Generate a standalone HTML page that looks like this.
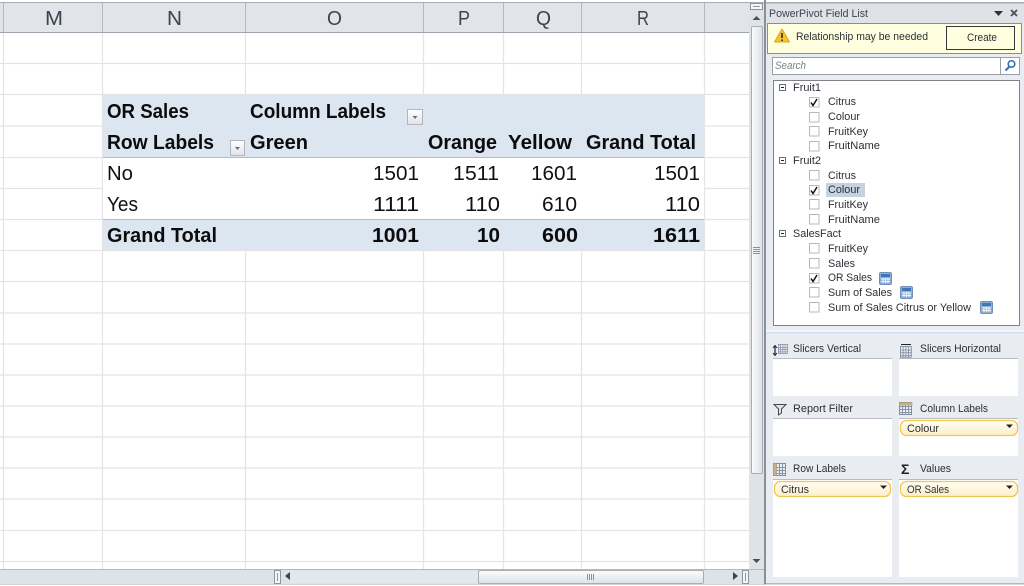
<!DOCTYPE html>
<html><head><meta charset="utf-8"><title>PowerPivot Field List</title>
<style>
html,body{margin:0;padding:0;background:#fff;overflow:hidden}
svg{display:block;filter:blur(.35px)}
text{font-family:"Liberation Sans",sans-serif;white-space:pre}
.h{font-size:20px;fill:#3c444f}
.b{font-size:20px;font-weight:bold;fill:#0c0c0c}
.n{font-size:20px;fill:#111}
.s{font-size:11px;fill:#2b2f36}
</style></head><body>
<svg width="1024" height="586" viewBox="0 0 1024 586" xmlns="http://www.w3.org/2000/svg">
<defs>
<linearGradient id="pill" x1="0" y1="0" x2="0" y2="1"><stop offset="0" stop-color="#fffdf3"/><stop offset="1" stop-color="#fdeec8"/></linearGradient>
<linearGradient id="btn" x1="0" y1="0" x2="0" y2="1"><stop offset="0" stop-color="#fff"/><stop offset="1" stop-color="#dfe3ea"/></linearGradient>
<linearGradient id="thumb" x1="0" y1="0" x2="0" y2="1"><stop offset="0" stop-color="#fbfcfd"/><stop offset="1" stop-color="#dde1e8"/></linearGradient>
<linearGradient id="vthumb" x1="0" y1="0" x2="1" y2="0"><stop offset="0" stop-color="#fbfcfd"/><stop offset="1" stop-color="#dde1e8"/></linearGradient>
<g id="calc"><rect x="0.5" y="0.5" width="12" height="12" rx="1.5" fill="#8fb0d8" stroke="#6f8fb8"/><rect x="2" y="2" width="9" height="3" fill="#3f76b5"/><path d="M2 7h9M2 9.500h9M4 6v5M6.500 6v5M9 6v5" stroke="#eef3f9" stroke-width="1"/></g>
<g id="tbl"><rect x="0.5" y="0.5" width="12" height="12" fill="#eceef5" stroke="#7f8a9e"/><path d="M0 4.500h13M0 7.500h13M0 10.500h13M3.500 0v13M6.500 0v13M9.500 0v13" stroke="#8a94a8" stroke-width="1"/></g>
<path id="cb" d="M0.5 0.500h9.500v9.500h-9.500z" fill="#fff" stroke="#b5b9bf"/>
<g id="minus"><rect x="0.5" y="0.5" width="6" height="6" fill="#fff" stroke="#6c7075"/><path d="M2 3.500h3" stroke="#222"/></g>
<path id="check" d="M2 5.500l2 3 4-6.500" fill="none" stroke="#111" stroke-width="1.500"/>
</defs>

<!-- sheet -->
<rect width="1024" height="586" fill="#fff"/>
<rect x="0" y="2" width="1024" height="1.500" fill="#a9aeb5"/>
<rect x="0" y="3" width="749" height="29" fill="#e1e4e8"/>
<rect x="0" y="32" width="749" height="1" fill="#9ea4ac"/>

<g stroke="#e4e4e4" stroke-width="1.200">
<path d="M0 63.500h749M0 94.500h749M0 126h749M0 157.500h749M0 188.500h749M0 219.500h749M0 250.500h749M0 281.500h749M0 313h749M0 344h749M0 375h749M0 406h749M0 437h749M0 468h749M0 499h749M0 530.500h749M0 561.500h749"/>
<path d="M3.500 33v537M102.500 33v537M245.500 33v537M423.500 33v537M503.500 33v537M581.500 33v537M704.500 33v537"/>
</g>
<g stroke="#b4b9c0" stroke-width="1">
<path d="M3.500 3v29M102.500 3v29M245.500 3v29M423.500 3v29M503.500 3v29M581.500 3v29M704.500 3v29"/>
</g>
<text class="h" x="45" y="25" textLength="18" lengthAdjust="spacingAndGlyphs">M</text>
<text class="h" x="167" y="25" textLength="15" lengthAdjust="spacingAndGlyphs">N</text>
<text class="h" x="327" y="25" textLength="15" lengthAdjust="spacingAndGlyphs">O</text>
<text class="h" x="458" y="25" textLength="12" lengthAdjust="spacingAndGlyphs">P</text>
<text class="h" x="536" y="25" textLength="15" lengthAdjust="spacingAndGlyphs">Q</text>
<text class="h" x="637" y="25" textLength="12" lengthAdjust="spacingAndGlyphs">R</text>

<!-- pivot -->
<rect x="103" y="95" width="601" height="62" fill="#dce6f1"/>
<rect x="103" y="219" width="601" height="31" fill="#dce6f1"/>
<rect x="103" y="157" width="601" height="62" fill="#fff"/>
<path d="M103 157.500h601M103 219.500h601" stroke="#a3bddc" stroke-width="1"/>
<path d="M102.500 157v62M704.500 157v62" stroke="#e4e4e4"/>

<text class="b" x="107" y="118" textLength="82" lengthAdjust="spacingAndGlyphs">OR Sales</text>
<text class="b" x="250" y="118" textLength="136" lengthAdjust="spacingAndGlyphs">Column Labels</text>
<text class="b" x="107" y="149" textLength="107" lengthAdjust="spacingAndGlyphs">Row Labels</text>
<text class="b" x="250" y="149" textLength="58" lengthAdjust="spacingAndGlyphs">Green</text>
<text class="b" x="428" y="149" textLength="69" lengthAdjust="spacingAndGlyphs">Orange</text>
<text class="b" x="508" y="149" textLength="64" lengthAdjust="spacingAndGlyphs">Yellow</text>
<text class="b" x="586" y="149" textLength="110" lengthAdjust="spacingAndGlyphs">Grand Total</text>

<text class="n" x="107" y="180" textLength="26" lengthAdjust="spacingAndGlyphs">No</text>
<text class="n" x="107" y="211" textLength="31" lengthAdjust="spacingAndGlyphs">Yes</text>
<text class="b" x="107" y="242" textLength="110" lengthAdjust="spacingAndGlyphs">Grand Total</text>

<text class="n" x="373" y="180" textLength="46" lengthAdjust="spacingAndGlyphs">1501</text>
<text class="n" x="453" y="180" textLength="46" lengthAdjust="spacingAndGlyphs">1511</text>
<text class="n" x="531" y="180" textLength="46" lengthAdjust="spacingAndGlyphs">1601</text>
<text class="n" x="654" y="180" textLength="46" lengthAdjust="spacingAndGlyphs">1501</text>
<text class="n" x="373" y="211" textLength="46" lengthAdjust="spacingAndGlyphs">1111</text>
<text class="n" x="465" y="211" textLength="35" lengthAdjust="spacingAndGlyphs">110</text>
<text class="n" x="542" y="211" textLength="35" lengthAdjust="spacingAndGlyphs">610</text>
<text class="n" x="665" y="211" textLength="35" lengthAdjust="spacingAndGlyphs">110</text>
<text class="b" x="372" y="242" textLength="47" lengthAdjust="spacingAndGlyphs">1001</text>
<text class="b" x="477" y="242" textLength="23" lengthAdjust="spacingAndGlyphs">10</text>
<text class="b" x="542" y="242" textLength="36" lengthAdjust="spacingAndGlyphs">600</text>
<text class="b" x="653" y="242" textLength="47" lengthAdjust="spacingAndGlyphs">1611</text>

<!-- filter buttons -->
<rect x="230.500" y="140.500" width="14" height="15" fill="url(#btn)" stroke="#b3b7bd"/>
<path d="M235 147h5l-2.500 3z" fill="#6b6f75"/>
<rect x="407.500" y="109.500" width="15" height="15" fill="url(#btn)" stroke="#b3b7bd"/>
<path d="M412.500 116h5l-2.500 3z" fill="#6b6f75"/>

<!-- vertical scrollbar -->
<rect x="749" y="3" width="15" height="567" fill="#dee2e9"/>
<rect x="750.500" y="3.500" width="12" height="6" fill="#f5f6f8" stroke="#8f959d"/>
<path d="M753 6.500h7" stroke="#8f959d"/>
<path d="M752.500 20l4-4 4 4z" fill="#4a4f56"/>
<rect x="751.500" y="26.500" width="11" height="447" rx="1.500" fill="url(#vthumb)" stroke="#a9aeb5"/>
<path d="M753 247.500h7M753 249.500h7M753 251.500h7M753 253.500h7" stroke="#8d9299"/>
<path d="M752.500 559h8l-4 4z" fill="#4a4f56"/>
<rect x="764" y="0" width="2" height="586" fill="#8b9097"/>

<!-- horizontal scrollbar -->
<rect x="0" y="569" width="764" height="15" fill="#dee2e9"/>
<path d="M0 569.500h764" stroke="#b4b9c0"/>
<path d="M0 584.500h764" stroke="#a2a7ae"/>
<rect x="290" y="571" width="188" height="12" fill="#e4e7ed"/>
<rect x="274.500" y="570.500" width="6" height="13" fill="#f5f6f8" stroke="#8f959d"/>
<path d="M277.500 573v8" stroke="#8f959d"/>
<path d="M290 572v8l-5-4z" fill="#3f444b"/>
<rect x="478.500" y="570.500" width="225" height="13" rx="1.500" fill="url(#thumb)" stroke="#a9aeb5"/>
<path d="M587.500 574v6M589.500 574v6M591.500 574v6M593.500 574v6" stroke="#8d9299"/>
<path d="M733 572v8l5-4z" fill="#3f444b"/>
<rect x="742.500" y="570.500" width="6" height="13" fill="#f5f6f8" stroke="#8f959d"/>
<path d="M745.500 573v8" stroke="#8f959d"/>

<!-- panel -->
<rect x="766" y="3" width="258" height="583" fill="#e9ecf1"/>
<rect x="766" y="3" width="258" height="20" fill="#dfe2e7"/>
<rect x="766" y="2" width="258" height="1.500" fill="#a9aeb5"/>
<text class="s" x="769" y="17" textLength="99" lengthAdjust="spacingAndGlyphs" style="fill:#3c444f">PowerPivot Field List</text>
<path d="M994 11h9l-4.500 5z" fill="#30343a"/>
<path d="M1011 10l6 6M1017 10l-6 6" stroke="#4a4f56" stroke-width="1.800"/>

<!-- yellow bar -->
<rect x="767.500" y="23.500" width="254" height="30" fill="#ffffe0" stroke="#8a8e92"/>
<path d="M782 29l7.500 13h-15z" fill="#f6c32e" stroke="#d9a520" stroke-linejoin="round"/>
<path d="M782 33v5M782 39.500v1.500" stroke="#222" stroke-width="1.500"/>
<text class="s" x="796" y="40" textLength="132" lengthAdjust="spacingAndGlyphs">Relationship may be needed</text>
<rect x="946.500" y="26.500" width="68" height="23" fill="#ffffe0" stroke="#33363a"/>
<text class="s" x="967" y="41" textLength="30" lengthAdjust="spacingAndGlyphs">Create</text>

<!-- search -->
<rect x="772.500" y="57.500" width="247" height="17" fill="#fff" stroke="#9a9ea4"/>
<path d="M1000.500 58v16" stroke="#9a9ea4"/>
<text class="s" x="775" y="69" textLength="31" lengthAdjust="spacingAndGlyphs" font-style="italic" style="fill:#7d8187">Search</text>
<circle cx="1011.500" cy="64" r="3.300" fill="none" stroke="#2f6fb5" stroke-width="1.500"/>
<path d="M1009 67l-3.500 3.500" stroke="#2f6fb5" stroke-width="2"/>

<!-- tree -->
<rect x="773.500" y="80.500" width="246" height="245" fill="#fff" stroke="#7f8389"/>
<use href="#minus" x="779" y="84"/>
<text class="s" x="793" y="91" textLength="28" lengthAdjust="spacingAndGlyphs">Fruit1</text>
<use href="#cb" x="809" y="97"/><use href="#check" x="809" y="97"/>
<text class="s" x="828" y="105" textLength="28" lengthAdjust="spacingAndGlyphs">Citrus</text>
<use href="#cb" x="809" y="112"/>
<text class="s" x="828" y="120" textLength="32" lengthAdjust="spacingAndGlyphs">Colour</text>
<use href="#cb" x="809" y="126"/>
<text class="s" x="828" y="135" textLength="40" lengthAdjust="spacingAndGlyphs">FruitKey</text>
<use href="#cb" x="809" y="141"/>
<text class="s" x="828" y="149" textLength="52" lengthAdjust="spacingAndGlyphs">FruitName</text>
<use href="#minus" x="779" y="157"/>
<text class="s" x="793" y="164" textLength="28" lengthAdjust="spacingAndGlyphs">Fruit2</text>
<use href="#cb" x="809" y="170"/>
<text class="s" x="828" y="179" textLength="28" lengthAdjust="spacingAndGlyphs">Citrus</text>
<rect x="826" y="183" width="39" height="14" fill="#c5d2e0"/>
<use href="#cb" x="809" y="185"/><use href="#check" x="809" y="185"/>
<text class="s" x="828" y="193" textLength="32" lengthAdjust="spacingAndGlyphs">Colour</text>
<use href="#cb" x="809" y="199"/>
<text class="s" x="828" y="208" textLength="40" lengthAdjust="spacingAndGlyphs">FruitKey</text>
<use href="#cb" x="809" y="214"/>
<text class="s" x="828" y="223" textLength="52" lengthAdjust="spacingAndGlyphs">FruitName</text>
<use href="#minus" x="779" y="230"/>
<text class="s" x="793" y="237" textLength="48" lengthAdjust="spacingAndGlyphs">SalesFact</text>
<use href="#cb" x="809" y="243"/>
<text class="s" x="828" y="252" textLength="40" lengthAdjust="spacingAndGlyphs">FruitKey</text>
<use href="#cb" x="809" y="258"/>
<text class="s" x="828" y="267" textLength="27" lengthAdjust="spacingAndGlyphs">Sales</text>
<use href="#cb" x="809" y="273"/><use href="#check" x="809" y="273"/>
<text class="s" x="828" y="281" textLength="44" lengthAdjust="spacingAndGlyphs">OR Sales</text>
<use href="#calc" x="879" y="272"/>
<use href="#cb" x="809" y="287"/>
<text class="s" x="828" y="296" textLength="64" lengthAdjust="spacingAndGlyphs">Sum of Sales</text>
<use href="#calc" x="900" y="286"/>
<use href="#cb" x="809" y="302"/>
<text class="s" x="828" y="311" textLength="143" lengthAdjust="spacingAndGlyphs">Sum of Sales Citrus or Yellow</text>
<use href="#calc" x="980" y="301"/>

<!-- divider -->
<rect x="766" y="330" width="258" height="2" fill="#f4f6f9"/>
<rect x="766" y="332" width="258" height="1.500" fill="#cfe0f3"/>

<!-- area labels -->
<path d="M775 346v9" stroke="#222" stroke-width="1.200"/><path d="M773 348l2-2.500 2 2.500M773 353l2 2.500 2-2.500" fill="none" stroke="#222"/>
<g transform="translate(778,344) scale(0.75)"><use href="#tbl"/></g>
<text class="s" x="793" y="352" textLength="68" lengthAdjust="spacingAndGlyphs">Slicers Vertical</text>
<path d="M901 344.500h10" stroke="#222"/>
<g transform="translate(900,346) scale(0.9)"><use href="#tbl"/></g>
<text class="s" x="920" y="352" textLength="81" lengthAdjust="spacingAndGlyphs">Slicers Horizontal</text>
<rect x="773" y="358" width="119" height="38" fill="#fff"/><path d="M773 358.500h119" stroke="#b8bcc2"/>
<rect x="899" y="358" width="119" height="38" fill="#fff"/><path d="M899 358.500h119" stroke="#b8bcc2"/>

<path d="M774 404.500h12l-4.500 4.500v4l-3 2v-6z" fill="#dfe2e7" stroke="#44484e"/>
<text class="s" x="793" y="412" textLength="60" lengthAdjust="spacingAndGlyphs">Report Filter</text>
<use href="#tbl" x="899" y="402"/>
<rect x="899.500" y="402.500" width="13" height="3" fill="#c9b17c"/>
<text class="s" x="920" y="412" textLength="68" lengthAdjust="spacingAndGlyphs">Column Labels</text>
<rect x="773" y="418" width="119" height="38" fill="#fff"/><path d="M773 418.500h119" stroke="#b8bcc2"/>
<rect x="899" y="418" width="119" height="38" fill="#fff"/><path d="M899 418.500h119" stroke="#b8bcc2"/>
<rect x="900.500" y="420.500" width="117" height="15" rx="6" fill="url(#pill)" stroke="#f0c84f" stroke-width="1.300"/>
<text class="s" x="907" y="432" textLength="32" lengthAdjust="spacingAndGlyphs">Colour</text>
<path d="M1006 424.500h7l-3.500 3.500z" fill="#222"/>

<use href="#tbl" x="773" y="463"/>
<rect x="773.500" y="463.500" width="3" height="12" fill="#c9b17c"/>
<text class="s" x="793" y="472" textLength="53" lengthAdjust="spacingAndGlyphs">Row Labels</text>
<text x="901" y="474" style="font-size:14px;font-weight:bold;fill:#222">Σ</text>
<text class="s" x="920" y="472" textLength="31" lengthAdjust="spacingAndGlyphs">Values</text>
<rect x="773" y="479" width="119" height="98" fill="#fff"/><path d="M773 479.500h119" stroke="#b8bcc2"/>
<rect x="899" y="479" width="119" height="98" fill="#fff"/><path d="M899 479.500h119" stroke="#b8bcc2"/>
<rect x="774.500" y="481.500" width="116" height="15" rx="6" fill="url(#pill)" stroke="#f0c84f" stroke-width="1.300"/>
<text class="s" x="781" y="493" textLength="28" lengthAdjust="spacingAndGlyphs">Citrus</text>
<path d="M880 485.500h7l-3.500 3.500z" fill="#222"/>
<rect x="900.500" y="481.500" width="117" height="15" rx="6" fill="url(#pill)" stroke="#f0c84f" stroke-width="1.300"/>
<text class="s" x="907" y="493" textLength="42" lengthAdjust="spacingAndGlyphs">OR Sales</text>
<path d="M1006 485.500h7l-3.500 3.500z" fill="#222"/>

<rect x="0" y="584.500" width="1024" height="1.500" fill="#fff"/>
<rect x="766" y="583" width="258" height="1.500" fill="#b4b9c0"/>
</svg>
</body></html>
